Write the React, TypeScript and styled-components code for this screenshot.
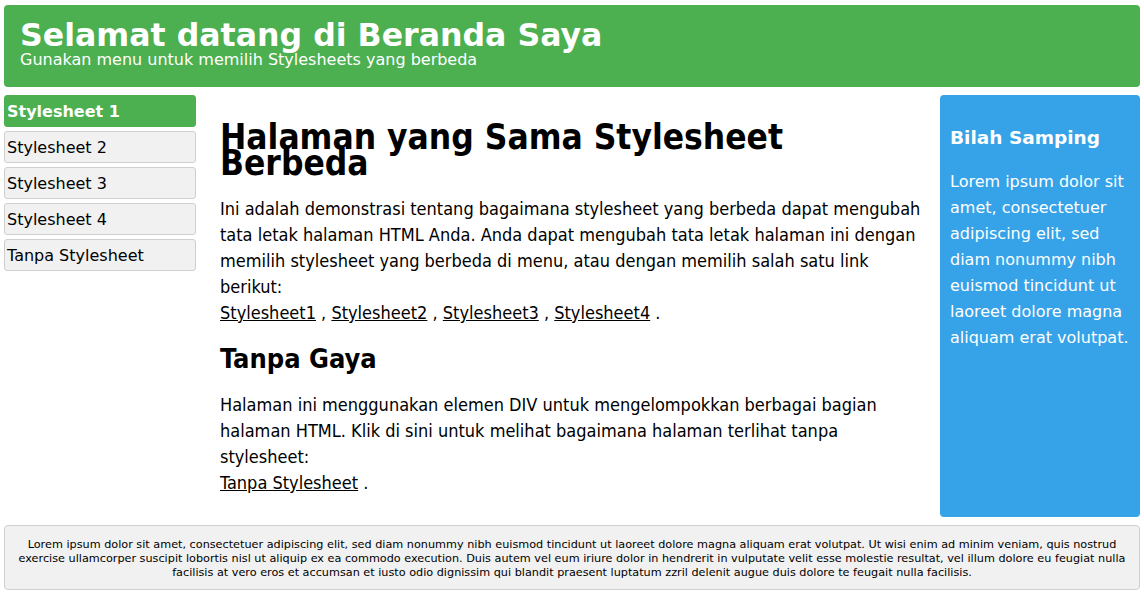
import React from "react";
import styled, { createGlobalStyle } from "styled-components";

const Global = createGlobalStyle`
  html, body { margin: 0; padding: 0; background: #ffffff; }
  body { font-family: "DejaVu Sans", Verdana, sans-serif; color: #000; }
`;

const Page = styled.div`
  padding: 5px 4px 0 4px;
  width: 1136px;
`;

const Header = styled.header`
  background: #4caf50;
  color: #fff;
  border-radius: 4px;
  padding: 14px 16px 18px 16px;
  height: 82px;
  box-sizing: border-box;
`;

const Title = styled.h1`
  margin: 0;
  font-size: 31.6px;
  line-height: 32px;
  font-weight: bold;
`;

const Subtitle = styled.div`
  font-size: 16px;
  line-height: 18px;
  margin-top: 0;
`;

const Body = styled.div`
  display: grid;
  grid-template-columns: 192px 1fr 200px;
  margin-top: 8px;
`;

const Menu = styled.nav`
  display: flex;
  flex-direction: column;
  gap: 4px;
`;

const MenuItem = styled.a<{ $active?: boolean }>`
  display: block;
  height: 32px;
  box-sizing: border-box;
  padding: 0 2px;
  line-height: 32px;
  font-size: 16px;
  border-radius: 3px;
  border: 1px solid ${(p) => (p.$active ? "#4caf50" : "#cfcfcf")};
  background: ${(p) => (p.$active ? "#4caf50" : "#f1f1f1")};
  color: ${(p) => (p.$active ? "#fff" : "#000")};
  font-weight: ${(p) => (p.$active ? "bold" : "normal")};
  text-decoration: none;
`;

const Main = styled.main`
  padding: 0 16px 0 24px;
  font-family: "DejaVu Sans Condensed", "DejaVu Sans", sans-serif;
  font-stretch: condensed;
`;

const MainTitle = styled.h1`
  font-size: 35px;
  line-height: 26px;
  margin: 29px 0 20px 0;
  font-weight: bold;
`;

const SubTitle = styled.h2`
  font-size: 27px;
  line-height: 28px;
  margin: 19px 0 19px 0;
  font-weight: bold;
`;

const Para = styled.p`
  font-size: 18px;
  line-height: 26px;
  margin: 0;
`;

const Link = styled.a`
  color: #000;
  text-decoration: underline;
`;

const Sidebar = styled.aside`
  background: #36a3e8;
  color: #fff;
  border-radius: 4px;
  padding: 31px 10px 20px 10px;
  height: 422px;
  box-sizing: border-box;
`;

const SideTitle = styled.h2`
  margin: 0 0 19px 0;
  font-size: 18.5px;
  line-height: 24px;
  font-weight: bold;
`;

const SideText = styled.p`
  margin: 0;
  font-size: 16px;
  line-height: 26px;
`;

const Footer = styled.footer`
  margin-top: 8px;
  background: #f1f1f1;
  border: 1px solid #cfcfcf;
  border-radius: 4px;
  padding: 12px 8px 9px 8px;
  font-size: 11.24px;
  line-height: 14px;
  text-align: center;
  height: 65px;
  box-sizing: border-box;
`;

export default function App() {
  return (
    <>
      <Global />
      <Page>
        <Header>
          <Title>Selamat datang di Beranda Saya</Title>
          <Subtitle>Gunakan menu untuk memilih Stylesheets yang berbeda</Subtitle>
        </Header>
        <Body>
          <Menu>
            <MenuItem $active>Stylesheet 1</MenuItem>
            <MenuItem>Stylesheet 2</MenuItem>
            <MenuItem>Stylesheet 3</MenuItem>
            <MenuItem>Stylesheet 4</MenuItem>
            <MenuItem>Tanpa Stylesheet</MenuItem>
          </Menu>
          <Main>
            <MainTitle>Halaman yang Sama Stylesheet Berbeda</MainTitle>
            <Para>
              Ini adalah demonstrasi tentang bagaimana stylesheet yang berbeda dapat mengubah
              tata letak halaman HTML Anda. Anda dapat mengubah tata letak halaman ini dengan
              memilih stylesheet yang berbeda di menu, atau dengan memilih salah satu link
              berikut:
              <br />
              <Link>Stylesheet1</Link> , <Link>Stylesheet2</Link> ,{" "}
              <Link>Stylesheet3</Link> , <Link>Stylesheet4</Link> .
            </Para>
            <SubTitle>Tanpa Gaya</SubTitle>
            <Para>
              Halaman ini menggunakan elemen DIV untuk mengelompokkan berbagai bagian halaman
              HTML. Klik di sini untuk melihat bagaimana halaman terlihat tanpa stylesheet:
              <br />
              <Link>Tanpa Stylesheet</Link> .
            </Para>
          </Main>
          <Sidebar>
            <SideTitle>Bilah Samping</SideTitle>
            <SideText>
              Lorem ipsum dolor sit amet, consectetuer adipiscing elit, sed diam nonummy nibh
              euismod tincidunt ut laoreet dolore magna aliquam erat volutpat.
            </SideText>
          </Sidebar>
        </Body>
        <Footer>
          Lorem ipsum dolor sit amet, consectetuer adipiscing elit, sed diam nonummy nibh
          euismod tincidunt ut laoreet dolore magna aliquam erat volutpat. Ut wisi enim ad
          minim veniam, quis nostrud exercise ullamcorper suscipit lobortis nisl ut aliquip ex
          ea commodo execution. Duis autem vel eum iriure dolor in hendrerit in vulputate velit
          esse molestie resultat, vel illum dolore eu feugiat nulla facilisis at vero eros et
          accumsan et iusto odio dignissim qui blandit praesent luptatum zzril delenit augue
          duis dolore te feugait nulla facilisis.
        </Footer>
      </Page>
    </>
  );
}
